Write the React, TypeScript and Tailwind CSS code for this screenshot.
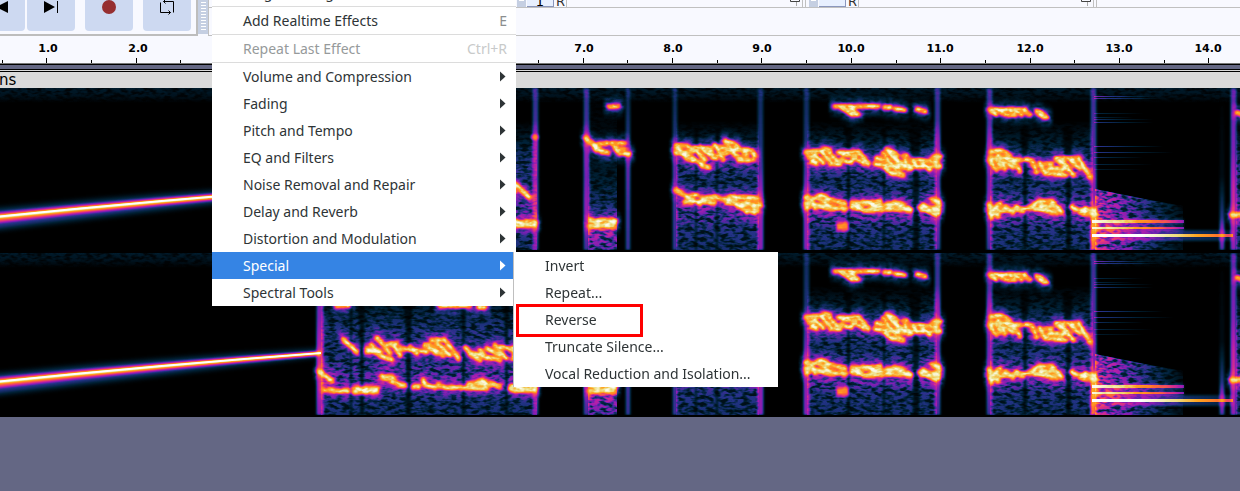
import { useState } from "react";

const FONT = "font-['Noto_Sans','Open_Sans',sans-serif]";

type Voice = { transform: string; d: string[] };

const VOICES: Voice[] = [
  {
    transform: "translate(300 37) scale(.33333)",
    d: [
      "M110 47H145M420 47H510M535 52H555M130 148L170 185M200 175L250 200L275 210M232 143L270 190M215 165L245 195M200 185H240M255 165L290 160M280 165L300 195M300 175L380 185M330 170L350 190M375 165L410 190M395 150H435L475 205M385 165L430 195M410 160L450 195M495 172L515 195L540 210M515 190L600 210M540 180L560 205M560 175L600 195M585 165L620 205M600 170L645 180L640 205",
      "M58 245L95 272M75 300H95M105 303H145M160 296H232M162 306H230M245 258L300 285L315 287M250 262H280M340 290H355M370 270L375 285L405 292M415 285L440 293H510M505 285L545 272L600 290M515 295H560M530 280L570 285M630 295H705M635 288L700 298",
    ],
  },
  {
    transform: "translate(500 -8) scale(.33333)",
    d: [
      "M40 308L88 352M328 79H355M258 175L300 210L325 220M322 190L290 194L302 215L322 218M274 186L290 212M372 190L335 190L350 206L372 208M340 195L358 220L388 222",
      "M528 198Q570 190 578 215L535 220M528 198L560 235L605 250M528 218L570 228L610 258L628 262M583 206L615 238M600 202L640 232M583 203L635 206M622 205L650 235M645 195L670 238M650 200L690 205M675 183L705 225L730 240M680 185L700 190L740 225M650 225L690 215M700 208L755 212Q775 235 750 240L715 240",
      "M40 426H104M40 436H104M272 420L300 432L345 430M270 438H340M285 422H345",
      "M528 330L570 355L600 372M560 350L590 345M605 355L650 350M610 365L645 368M655 355L690 360L720 380L765 398M690 350L770 355M680 368L780 375M700 355L740 395M730 352L770 390M555 365H600",
    ],
  },
  {
    transform: "translate(780 -8) scale(.33333)",
    d: [
      "M165 79H295M185 82L215 103L235 103L212 86M312 82H332M345 85L372 90M412 88L435 94",
      "M78 218L125 212M85 225L110 250L95 246M95 218L130 248M130 207L150 210M125 215L155 250M145 215L180 252M175 218L235 215L265 252M190 225L225 228L212 248L185 240M215 225L250 250M150 252H180",
      "M285 252L360 262L480 258M290 235L330 245M318 208L365 260M310 220L350 275L370 285M300 250L335 280L365 285M330 210L350 225M345 235L385 265M370 228L380 228M375 240L395 265M395 240L415 262M415 240L450 268M395 240L470 245M460 230H480",
      "M78 352L100 355L125 345L140 352M78 370L110 375L140 385L200 385M85 352L105 382M110 350L150 380M140 358L195 370M80 382L100 370M215 370L300 365M215 380L250 390L310 390M225 368L245 388M250 365L300 388M275 365L310 380M315 375L360 370L392 390M318 385L390 390M345 365L375 388M418 382L470 402M425 390L475 385M455 358L478 365L475 400M430 375L465 400",
    ],
  },
  {
    transform: "translate(970 -8) scale(.33333)",
    d: [
      "M60 89H165M62 92L78 102M85 92L105 104H135L120 93M140 92L155 104M160 92L180 104M200 94L212 97L230 112M203 98L222 112M803 98L820 104",
      "M60 240L80 270M65 215Q95 205 115 225L150 272M60 235L115 235M75 235L90 260M85 225L105 265M100 240L130 262M120 240H155M165 238L185 240L200 275M210 250L225 280L290 285M225 252H245M235 265H265M258 235L275 250L310 285M258 235H325L360 290M280 245L300 265M300 240L330 265M265 280L290 255",
      "M60 380L80 395M60 400L85 408M58 375L65 410M75 385L90 372M85 392L180 385M105 380L130 395M140 380L160 395M180 385L205 365H245L275 395M190 385L260 398M210 378L250 380M305 380L340 400H370M320 390L375 392M345 385L375 405M785 405H815",
    ],
  },
];

const BODIES = [
  { x: 321, w: 216, fill: "url(#speech)" },
  { x: 588, w: 29, fill: "url(#thin)" },
  { x: 676, w: 83, fill: "url(#speech)" },
  { x: 807, w: 130, fill: "url(#speech)" },
  { x: 990, w: 103, fill: "url(#speech)" },
  { x: 1236, w: 4, fill: "url(#speech)" },
];

const GAPS = [
  [361, 4], [351, 2], [407, 5], [463, 3], [506, 3],
  [696, 2], [717, 2], [848, 3], [884, 2], [914, 6], [1024, 4], [1067, 5],
];

const CLICKS = [
  { x: 317, w: 6, fill: "url(#clickHot)" },
  { x: 533, w: 5, fill: "url(#click)" },
  { x: 584, w: 5, fill: "url(#click)" },
  { x: 626, w: 4, fill: "url(#clickCool)" },
  { x: 673, w: 4, fill: "url(#clickCool)" },
  { x: 758, w: 5, fill: "url(#clickDim)" },
  { x: 804, w: 5, fill: "url(#clickDim)" },
  { x: 935, w: 5, fill: "url(#click)" },
  { x: 987, w: 5, fill: "url(#click)" },
  { x: 1091, w: 5, fill: "url(#clickBurn)" },
  { x: 1220, w: 4, fill: "url(#clickTail)" },
  { x: 1231, w: 5, fill: "url(#clickHot)" },
];

const HARMONICS = [
  [8, 60, 0.3], [10, 70, 0.26], [25, 50, 0.14], [29, 40, 0.14], [31, 60, 0.18],
  [34, 60, 0.22], [58, 70, 0.26], [64, 80, 0.24], [69, 50, 0.18], [76, 60, 0.14], [81, 50, 0.1],
];

function Gradient({ id, stops, across = false }: { id: string; stops: [number, number][]; across?: boolean }) {
  return (
    <linearGradient id={id} x1="0" y1="0" x2={across ? "1" : "0"} y2={across ? "0" : "1"}>
      {stops.map(([at, level]) => (
        <stop key={at} offset={at} stopColor="#fff" stopOpacity={level} />
      ))}
    </linearGradient>
  );
}

/* Gradients and filters shared by both channels. White opacity stands for signal level. */
function SpectrumDefs() {
  return (
    <svg className="absolute h-0 w-0" aria-hidden="true">
      <defs>
        <Gradient id="speech" stops={[[0, 0], [0.2, 0], [0.32, 0.08], [0.42, 0.15], [0.5, 0.19], [0.58, 0.15], [0.66, 0.19], [0.72, 0.24], [0.8, 0.25], [0.87, 0.18], [1, 0.15]]} />
        <Gradient id="thin" stops={[[0, 0], [0.4, 0.04], [0.6, 0.1], [0.76, 0.18], [0.84, 0.32], [0.92, 0.34], [1, 0.24]]} />
        <Gradient id="click" stops={[[0, 0.23], [0.2, 0.26], [0.32, 0.42], [0.55, 0.34], [0.72, 0.4], [1, 0.26]]} />
        <Gradient id="clickCool" stops={[[0, 0.14], [0.3, 0.2], [0.42, 0.34], [0.7, 0.28], [1, 0.25]]} />
        <Gradient id="clickDim" stops={[[0, 0.15], [0.35, 0.2], [0.5, 0.28], [0.65, 0.42], [1, 0.38]]} />
        <Gradient id="clickHot" stops={[[0, 0.29], [0.4, 0.36], [0.6, 0.5], [0.72, 0.53], [0.85, 0.46], [1, 0.38]]} />
        <Gradient id="clickBurn" stops={[[0, 0.25], [0.5, 0.3], [0.72, 0.42], [0.8, 0.75], [0.9, 0.82], [1, 0.7]]} />
        <Gradient id="clickTail" stops={[[0, 0], [0.55, 0.04], [0.8, 0.22], [0.9, 0.46], [1, 0.28]]} />
        <Gradient id="decay" across stops={[[0, 0.42], [0.25, 0.34], [0.5, 0.22], [0.75, 0.12], [1, 0.04]]} />
        <Gradient id="tone" across stops={[[0, 1], [0.2, 0.92], [0.45, 0.72], [0.8, 0.5], [1, 0.32]]} />
        <Gradient id="longTone" across stops={[[0, 1], [0.35, 1], [0.6, 0.85], [0.85, 0.66], [1, 0.5]]} />
        <Gradient id="fade" across stops={[[0, 1], [1, 0]]} />
        <Gradient id="hiss" stops={[[0, 0.07], [0.5, 0.05], [1, 0]]} />
        <filter id="grain" filterUnits="userSpaceOnUse" x="0" y="0" width="1240" height="162" colorInterpolationFilters="sRGB">
          <feTurbulence type="fractalNoise" baseFrequency="0.14 0.3" numOctaves="2" seed="7" />
          <feColorMatrix values="0 0 0 0 1  0 0 0 0 1  0 0 0 0 1  3.4 0 0 0 -1.1" result="n" />
          <feComposite in="SourceGraphic" in2="n" operator="arithmetic" k1="1" k2="0.32" />
        </filter>
        <filter id="mottle" filterUnits="userSpaceOnUse" x="0" y="0" width="1240" height="162" colorInterpolationFilters="sRGB">
          <feGaussianBlur in="SourceGraphic" stdDeviation="1 4" result="s" />
          <feTurbulence type="fractalNoise" baseFrequency="0.14 0.2" numOctaves="2" seed="11" />
          <feColorMatrix values="0 0 0 0 1  0 0 0 0 1  0 0 0 0 1  3 0 0 0 -0.9" result="n" />
          <feComposite in="s" in2="n" operator="arithmetic" k1="0.7" k2="0.5" />
        </filter>
        <filter id="sparkle" filterUnits="userSpaceOnUse" x="0" y="0" width="1240" height="162" colorInterpolationFilters="sRGB">
          <feGaussianBlur in="SourceGraphic" stdDeviation="0.8" result="s" />
          <feTurbulence type="fractalNoise" baseFrequency="0.16 0.25" numOctaves="2" seed="3" />
          <feColorMatrix values="0 0 0 0 1  0 0 0 0 1  0 0 0 0 1  3 0 0 0 -1" result="n" />
          <feComposite in="s" in2="n" operator="arithmetic" k1="0.42" k2="0.58" />
        </filter>
        <filter id="soft1" filterUnits="userSpaceOnUse" x="0" y="0" width="1240" height="162">
          <feGaussianBlur stdDeviation="0.9" />
        </filter>
        <filter id="soft3" filterUnits="userSpaceOnUse" x="0" y="0" width="1240" height="162">
          <feGaussianBlur stdDeviation="2 3" />
        </filter>
        <filter id="heat" filterUnits="userSpaceOnUse" x="0" y="0" width="1240" height="162" colorInterpolationFilters="sRGB">
          <feComponentTransfer>
            <feFuncR type="table" tableValues="0 0 0.13 0.45 0.68 0.9 1 1 0.93 1" />
            <feFuncG type="table" tableValues="0 0.13 0.2 0.13 0.12 0.22 0.44 0.64 0.88 1" />
            <feFuncB type="table" tableValues="0 0.21 0.52 0.7 0.68 0.48 0.18 0.12 0.52 1" />
          </feComponentTransfer>
        </filter>
      </defs>
    </svg>
  );
}

function VoiceStrokes({ width, level }: { width: number; level: number }) {
  return (
    <g fill="none" stroke="#fff" strokeWidth={width} strokeLinecap="round" strokeLinejoin="round" opacity={level}>
      {VOICES.map((v) => (
        <g key={v.transform} transform={v.transform}>
          {v.d.map((d) => (
            <path key={d} d={d} />
          ))}
        </g>
      ))}
    </g>
  );
}

function Spectrogram({ label }: { label: string }) {
  return (
    <svg role="img" aria-label={label} viewBox="0 0 1240 162" preserveAspectRatio="none" className="block h-[162px] w-full bg-black">
      <g filter="url(#heat)">
        <rect width="1240" height="162" fill="#000" />
        <g filter="url(#grain)">
          <rect width="1240" height="15" fill="url(#hiss)" />
          {BODIES.map((b) => (
            <rect key={b.x} x={b.x} y="0" width={b.w} height="162" fill={b.fill} />
          ))}
          <path d="M1095 101L1150 112L1183 118V162H1095Z" fill="url(#decay)" />
        </g>
        <g filter="url(#mottle)">
          <VoiceStrokes width={38} level={0.28} />
        </g>
        <g filter="url(#soft1)">
          {GAPS.map(([x, w]) => (
            <path key={x} d={`M${x - w} 40L${x - 1} 80V162H${x + w - 1}V80L${x + w + 1} 40Z`} fill="#000" opacity="0.7" />
          ))}
        </g>
        <g filter="url(#soft1)">
          <VoiceStrokes width={19} level={0.38} />
        </g>
        <g filter="url(#soft1)">
          {CLICKS.map((c) => (
            <g key={c.x}>
              <rect x={c.x - 1} y="0" width={c.w + 2} height="162" fill={c.fill} opacity="0.35" />
              <rect x={c.x} y="0" width={c.w} height="162" fill={c.fill} opacity="0.75" />
            </g>
          ))}
          <ellipse cx="535" cy="49" rx="4" ry="3" fill="#fff" opacity="0.5" />
          <rect x="836" y="133" width="13" height="11" rx="2" fill="#fff" opacity="0.5" />
          <rect x="837" y="136" width="11" height="5" rx="2" fill="#fff" opacity="0.4" />
        </g>
        <g filter="url(#sparkle)">
          <VoiceStrokes width={11} level={0.95} />
        </g>
        {HARMONICS.map(([y, w, level]) => (
          <rect key={y} x="1094" y={y} width={w} height="1" fill="url(#fade)" opacity={level} />
        ))}
        <g filter="url(#soft1)">
          <rect x="1092" y="142" width="142" height="11" fill="url(#longTone)" opacity="0.22" />
          <rect x="1092" y="131" width="92" height="6" fill="url(#tone)" opacity="0.35" />
          <rect x="1092" y="138" width="92" height="5" fill="url(#tone)" opacity="0.35" />
        </g>
        <rect x="1092" y="132" width="92" height="3" fill="url(#tone)" opacity="0.92" />
        <rect x="1092" y="139" width="92" height="2" fill="url(#tone)" opacity="0.88" />
        <rect x="1092" y="146" width="141" height="3" fill="url(#longTone)" />
        <g filter="url(#soft3)">
          <path d="M-6 122Q160 106 321 97V102Q160 121 -6 141Z" fill="#fff" opacity="0.26" />
        </g>
        <g filter="url(#soft1)">
          <path d="M-6 125Q160 109 321 98V103Q160 116 -6 135Z" fill="#fff" opacity="0.45" />
          <path d="M-6 128Q160 111 321 99V101Q160 114 -6 131Z" fill="#fff" />
        </g>
        <path d="M-6 129Q160 112 321 100" fill="none" stroke="#fff" strokeWidth="2" />
      </g>
    </svg>
  );
}

function Ruler() {
  const ticks = Array.from({ length: 28 }, (_, i) => i);
  return (
    <svg viewBox="0 0 1240 27" preserveAspectRatio="xMinYMin slice" className="block h-[27px] w-full font-['DejaVu_Sans',sans-serif] text-[11px] font-bold" role="img" aria-label="Timeline in seconds">
      {ticks.map((i) => {
        const x = Math.round(1.5 + i * 44.7);
        return <rect key={i} x={x} y={i % 2 ? 22 : 24} width="1" height={i % 2 ? 5 : 3} fill="#000" />;
      })}
      {ticks
        .filter((i) => i % 2)
        .map((i) => (
          <text key={i} x={Math.round(3.8 + i * 44.6)} y="16" textAnchor="middle" fill="#000">
            {((i + 1) / 2).toFixed(1)}
          </text>
        ))}
    </svg>
  );
}

function TransportButton({ label, children }: { label: string; children: React.ReactNode }) {
  return (
    <button aria-label={label} className="flex h-[31px] w-12 shrink-0 justify-center rounded-b-[4px] bg-[#cdd9f1]">
      <svg viewBox="0 0 16 16" className="h-4 w-4" fill="#000">
        {children}
      </svg>
    </button>
  );
}

function Grip() {
  return (
    <div className="flex h-[34px] w-[10px] shrink-0 flex-col items-center gap-[2px] bg-[#c5cfe2] pt-[2px]">
      {Array.from({ length: 10 }, (_, i) => (
        <span key={i} className="h-px w-[5px] shrink-0 bg-white" />
      ))}
    </div>
  );
}

function DockedMeter({ value, pad, width }: { value: string; pad: string; width: string }) {
  return (
    <div className={`flex h-[7px] shrink-0 items-end overflow-hidden border-r border-[#c0c0c0] ${width}`}>
      <div className={`flex h-full w-full items-end ${pad}`}>
        <span className="flex h-full w-[9px] justify-center bg-[#c5cfe2]">
          <span className="h-px w-[5px] bg-white" />
        </span>
        <span className="ml-px flex h-full w-[27px] items-end justify-center border-r border-b border-[#8b97bd] bg-[#e8f0ff] font-['DejaVu_Sans',sans-serif] text-[13px] leading-[9px]">
          {value}
        </span>
        <span className="ml-[2px] flex h-full items-end border-r border-[#c0c0c0] pr-px font-['DejaVu_Sans',sans-serif] text-[13px] leading-[11px] text-[#333]">
          R
        </span>
        <svg viewBox="0 0 12 7" className="ml-auto h-[7px] w-3 shrink-0" fill="none" stroke="#444">
          <path d="M1.5 0V1.5H10.5V0" />
          <path d="M7.5 2V6" stroke="#aaa" />
        </svg>
        <span className="ml-px h-full w-px bg-[#c0c0c0]" />
        <span className="w-[2px]" />
      </div>
    </div>
  );
}

type Entry = { label: string; shortcut?: string; submenu?: boolean; disabled?: boolean; rule?: boolean };

const EFFECTS: Entry[] = [
  { label: "Plugin Manager", rule: true },
  { label: "Add Realtime Effects", shortcut: "E", rule: true },
  { label: "Repeat Last Effect", shortcut: "Ctrl+R", disabled: true, rule: true },
  { label: "Volume and Compression", submenu: true },
  { label: "Fading", submenu: true },
  { label: "Pitch and Tempo", submenu: true },
  { label: "EQ and Filters", submenu: true },
  { label: "Noise Removal and Repair", submenu: true },
  { label: "Delay and Reverb", submenu: true },
  { label: "Distortion and Modulation", submenu: true },
  { label: "Special", submenu: true },
  { label: "Spectral Tools", submenu: true },
];

const SPECIAL = ["Invert", "Repeat...", "Reverse", "Truncate Silence...", "Vocal Reduction and Isolation..."];

function EffectMenu() {
  const [open, setOpen] = useState("Special");
  return (
    <div role="menu" className={`absolute top-[-21px] left-[212px] w-[304px] bg-white text-[14px] ${FONT}`}>
      {EFFECTS.map((e) => {
        const active = e.label === open;
        return (
          <div key={e.label} className={e.rule ? "border-b border-[#dcdcdc]" : ""}>
            <button
              role="menuitem"
              disabled={e.disabled}
              onClick={() => e.submenu && setOpen(e.label)}
              className={`flex h-[27px] w-full items-center justify-between pr-[9px] pl-[31px] text-left leading-[27px] whitespace-nowrap ${
                active ? "bg-[#3584e4] text-white" : e.disabled ? "text-[#969a9b]" : "text-[#2e3436]"
              }`}
            >
              <span>{e.label}</span>
              {e.shortcut && <span className={e.disabled ? "text-[#c8caca]" : "text-[#8b8e8f]"}>{e.shortcut}</span>}
              {e.submenu && (
                <svg viewBox="0 0 8 12" className="h-3 w-2" fill="currentColor">
                  <path d="M1 .5L6.5 5.5L1 10.5Z" />
                </svg>
              )}
            </button>
          </div>
        );
      })}
    </div>
  );
}

function SpecialMenu() {
  return (
    <div role="menu" className={`absolute top-[252px] left-[514px] w-[264px] bg-white text-[14px] text-[#2e3436] shadow-[-1px_0_0_#bfbfbf] ${FONT}`}>
      {SPECIAL.map((label) => (
        <button key={label} role="menuitem" className="block h-[27px] w-full pl-[31px] text-left leading-[27px] whitespace-nowrap">
          {label}
        </button>
      ))}
      <span className="pointer-events-none absolute top-[52px] left-[2px] h-[33px] w-[127px] border-[3px] border-[#ff0000]" />
    </div>
  );
}

export default function App() {
  return (
    <main className="relative min-h-screen overflow-hidden bg-[#646784]">
      <SpectrumDefs />
      <header className="flex h-9 bg-[#f8f9ff]">
        <div className="flex h-9 w-[198px] shrink-0 overflow-hidden border-r-2 border-b-2 border-[#bdbdbd]">
          <div className="-ml-[23px] flex">
            <TransportButton label="Skip to start">
              <path d="M15 1V13L3 7ZM1 1H2V13H1Z" />
            </TransportButton>
            <div className="ml-[2px] flex gap-[10px]">
              <TransportButton label="Skip to end">
                <path d="M1 1V13L12 7ZM14 1H15V13H14Z" />
              </TransportButton>
              <TransportButton label="Record">
                <circle cx="8" cy="7" r="7" fill="#962f31" />
              </TransportButton>
              <TransportButton label="Loop">
                <path d="M4.5 1.500H14.500V12.500M11.500 12.500H1.500V2.500M6.500 -.500L4.500 1.500L6.500 3.500M9.500 10.500L11.500 12.500L9.500 14.500" fill="none" stroke="#000" />
              </TransportButton>
            </div>
          </div>
        </div>
        <Grip />
        <div className="flex h-9 min-w-0 flex-1 flex-col overflow-hidden border-b border-l border-[#c0c0c0]">
          <div className="flex h-2 border-b border-[#c0c0c0]">
            <DockedMeter value="1" pad="pl-[308px]" width="w-[597px]" />
            <DockedMeter value="" pad="pl-[3px]" width="w-[291px]" />
          </div>
        </div>
      </header>
      <div className="border-b border-[#777] bg-[#f8f9ff]">
        <Ruler />
      </div>
      <div className="h-[6px] border-y border-black" />
      <div className="h-[2px] border-b border-black bg-[#dadada]" />
      <h2 className="-indent-px h-4 bg-[#dadada] font-['DejaVu_Sans',sans-serif] text-[15px] leading-4 text-black">ns</h2>
      <section className="flex flex-col gap-[3px] bg-black pb-[2px]">
        <Spectrogram label="Left channel spectrogram" />
        <Spectrogram label="Right channel spectrogram" />
      </section>
      <EffectMenu />
      <SpecialMenu />
    </main>
  );
}
